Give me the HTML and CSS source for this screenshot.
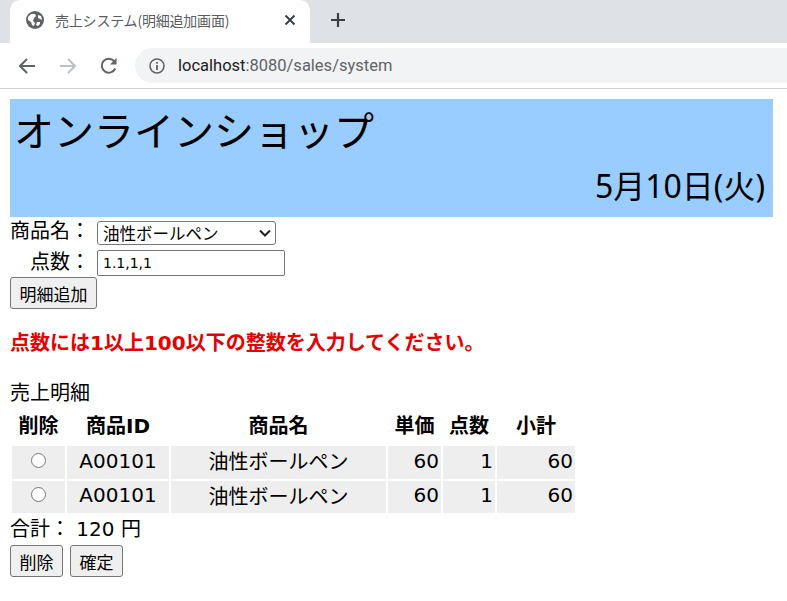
FILE: index.html
```html
<!DOCTYPE html>
<html lang="ja">
<head>
<meta charset="utf-8">
<title>売上システム(明細追加画面)</title>
<link rel="stylesheet" href="styles.css">
</head>
<body>
<div class="chrome">
  <div class="tabstrip">
    <div class="tab">
      <svg class="globe" viewBox="0 0 18 18" width="18" height="18"><circle cx="9" cy="9" r="9" fill="#5f6368"/><path d="M2 6l3-3 4 0 1 2-2 2-1 3 2 2-1 3-2-1-1-3-3-2zM12 4l3 1 1 4-2-1-2-1zM11 11l3 0 0 2-2 2-2-1z" fill="#fff"/></svg>
      <span class="tab-title">売上システム(明細追加画面)</span>
      <svg class="close" viewBox="0 0 12 12" width="12" height="12"><path d="M1.5 1.5l9 9M10.500 1.500l-9 9" stroke="#3c4043" stroke-width="2" fill="none"/></svg>
    </div>
    <svg class="plus" viewBox="0 0 16 16" width="16" height="16"><path d="M8 1v14M1 8h14" stroke="#3c4043" stroke-width="2.200" fill="none"/></svg>
  </div>
  <div class="toolbar">
    <svg class="nav" viewBox="0 0 18 18" width="18" height="18"><path d="M17 9H2M9 2L2 9l7 7" stroke="#5f6368" stroke-width="2" fill="none"/></svg>
    <svg class="nav" viewBox="0 0 18 18" width="18" height="18"><path d="M1 9h15M9 2l7 7-7 7" stroke="#bdc1c6" stroke-width="2" fill="none"/></svg>
    <svg class="nav" viewBox="0 0 18 18" width="18" height="18"><path d="M15.200 11.500A7 7 0 1 1 14 4" stroke="#5f6368" stroke-width="2" fill="none"/><path d="M16.500 1v6.500H10z" fill="#5f6368"/></svg>
    <div class="omnibox">
      <svg class="info" viewBox="0 0 16 16" width="16" height="16"><circle cx="8" cy="8" r="7" stroke="#5f6368" stroke-width="1.600" fill="none"/><path d="M8 7v5M8 4v1.800" stroke="#5f6368" stroke-width="1.800" fill="none"/></svg>
      <span class="url">localhost<span class="url-dim">:8080/sales/system</span></span>
    </div>
  </div>
</div>
<main class="page">
  <header class="banner">
    <div class="shop">オンラインショップ</div>
    <div class="date">5月10日(火)</div>
  </header>
  <form class="form">
    <div class="field">
      <span class="label">商品名：</span>
      <select class="select"><option>油性ボールペン</option></select>
    </div>
    <div class="field">
      <span class="label label-right">点数：</span>
      <input class="input" type="text" value="1.1,1,1">
    </div>
    <button class="btn" type="button">明細追加</button>
    <p class="error">点数には1以上100以下の整数を入力してください。</p>
    <div class="section">売上明細</div>
    <table class="table">
      <thead>
        <tr><th class="c1">削除</th><th class="c2">商品ID</th><th class="c3">商品名</th><th class="c4">単価</th><th class="c5">点数</th><th class="c6">小計</th></tr>
      </thead>
      <tbody>
        <tr><td class="center"><input class="radio" type="radio" name="row"></td><td class="center">A00101</td><td class="center">油性ボールペン</td><td class="right">60</td><td class="right">1</td><td class="right">60</td></tr>
        <tr><td class="center"><input class="radio" type="radio" name="row"></td><td class="center">A00101</td><td class="center">油性ボールペン</td><td class="right">60</td><td class="right">1</td><td class="right">60</td></tr>
      </tbody>
    </table>
    <div class="total">合計： 120 円</div>
    <div class="actions">
      <button class="btn" type="button">削除</button>
      <button class="btn" type="button">確定</button>
    </div>
  </form>
</main>
</body>
</html>
```

FILE: styles.css
```css
* { box-sizing: border-box; }
html, body { margin: 0; padding: 0; background: #fff; overflow: hidden; }
body { font-family: "DejaVu Sans", "Noto Sans CJK JP", sans-serif; color: #000; }

.chrome { height: 89px; border-bottom: 1px solid #d0d2d5; font-family: "Noto Sans CJK JP", sans-serif; }
.tabstrip { height: 43px; background: #dee1e6; display: flex; align-items: center; }
.tab { width: 300px; height: 43px; margin-left: 10px; background: #fff; border-radius: 10px 10px 0 0; display: flex; align-items: center; padding: 0 14px 4px 16px; }
.globe { flex: none; }
.tab-title { margin-left: 11px; font-size: 14px; color: #5a5d61; flex: 1; white-space: nowrap; letter-spacing: -0.200px; }
.close { flex: none; }
.plus { margin-left: 20px; margin-top: -4px; }
.toolbar { height: 45px; display: flex; align-items: center; padding: 0 0 0 18px; gap: 23px; }
.nav { flex: none; }
.omnibox { flex: 1; height: 35px; margin-left: -6px; background: #f1f3f4; border-radius: 18px 0 0 18px; display: flex; align-items: center; padding-left: 14px; gap: 13px; }
.url { font-family: "Roboto", sans-serif; font-size: 16.500px; color: #202124; }
.url-dim { color: #5f6368; }

.page { padding: 10px 14px 0 10px; }
.banner { background: #99ccff; height: 118px; padding: 0 8px 0 7px; display: flex; flex-direction: column; justify-content: space-between; }
.shop { font-size: 40px; line-height: 60px; margin-left: -3px; font-family: "Noto Sans CJK JP", sans-serif; }
.date { font-size: 32px; line-height: 54px; height: 62px; text-align: right; font-family: "Noto Sans", "Noto Sans CJK JP", sans-serif; }

.form { font-size: 20px; }
.field { display: flex; align-items: center; height: 30px; }
.label { width: 87px; flex: none; line-height: 26px; height: 30px; font-family: "Noto Sans CJK JP", sans-serif; }
.label-right { text-align: left; padding-left: 20px; padding-top: 1px; }
.select { width: 179px; height: 24px; font-size: 16.500px; font-family: "Noto Sans CJK JP", sans-serif; background: #fff url("data:image/svg+xml,%3Csvg xmlns='http://www.w3.org/2000/svg' width='12' height='8'%3E%3Cpath d='M1 1.500l5 5 5-5' stroke='%23222' stroke-width='2' fill='none'/%3E%3C/svg%3E") no-repeat right 4px center; appearance: none; border: 1px solid #767676; border-radius: 3px; padding: 0 0 0 5px; color: #000; line-height: 20px; margin-top: 1px; }
.input { width: 188px; height: 26px; margin-top: 2px; font-size: 14px; font-family: "DejaVu Sans", sans-serif; border: 1px solid #767676; border-radius: 2px; padding: 1px 5px; background: #fff; color: #000; }
.btn { height: 32px; padding: 0 8.500px; font-size: 17px; font-family: "Noto Sans CJK JP", sans-serif; background: #efefef; border: 1px solid #767676; border-radius: 3px; color: #000; line-height: 1; display: block; }
.error { margin: 20px 0 0; height: 29px; line-height: 29px; font-weight: bold; font-size: 20px; color: #e60000; font-family: "DejaVu Sans", "Noto Sans CJK JP", sans-serif; }
.section { margin-top: 19px; line-height: 29px; height: 29px; font-family: "Noto Sans CJK JP", sans-serif; }

.table { border-collapse: separate; border-spacing: 2px; table-layout: fixed; width: 567px; margin-top: -2px; }
.table th { height: 38px; font-weight: bold; font-size: 20px; padding: 0 0 1px; }
.table td { height: 32.500px; background: #eeeeee; padding: 0 2px 3px; font-size: 20px; }
.c1 { width: 53px; } .c2 { width: 102px; } .c3 { width: 215px; } .c4 { width: 53px; } .c5 { width: 52px; } .c6 { width: 78px; }
.center { text-align: center; }
.right { text-align: right; }
.radio { width: 15px; height: 15px; margin: 0 0 4px; vertical-align: middle; }
.total { height: 30px; line-height: 28px; }
.actions { display: flex; gap: 7px; }
```
